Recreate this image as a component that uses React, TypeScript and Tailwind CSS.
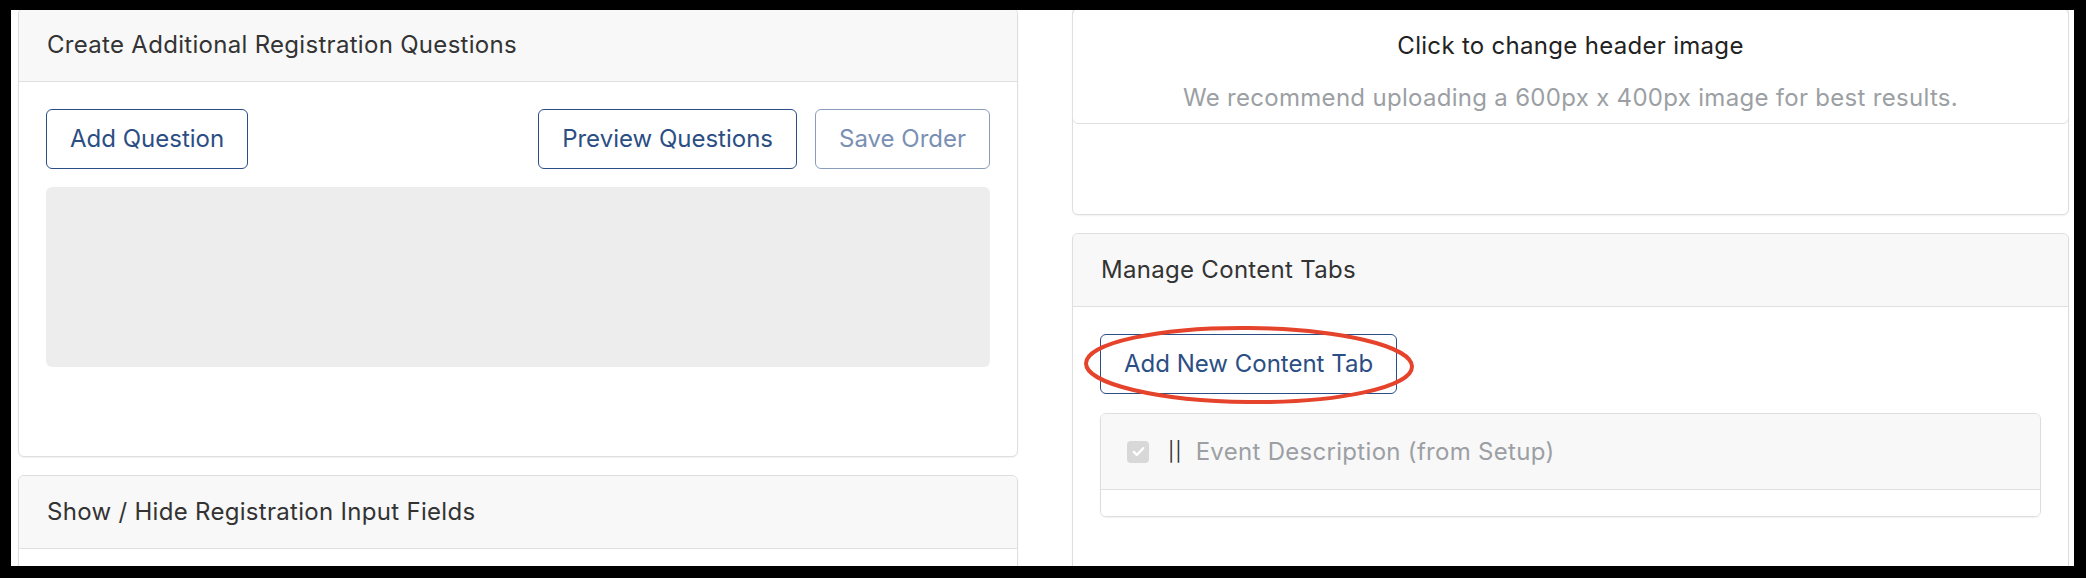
import React from 'react';

function Card({ title, children, className = '' }: { title?: string; children: React.ReactNode; className?: string }) {
  return (
    <div className={`rounded-[6px] border border-[#dedede] bg-white shadow-[0_1px_2px_rgba(0,0,0,0.06)] ${className}`}>
      {title && (
        <div className="flex h-[73px] items-center rounded-t-[6px] border-b border-[#e0e0e0] bg-[#f8f8f8] px-[28px] text-[24px] leading-[36px] text-[#333]">
          {title}
        </div>
      )}
      {children}
    </div>
  );
}

function OutlineButton({ label, muted = false }: { label: string; muted?: boolean }) {
  return (
    <button
      className={`flex h-[60px] items-center rounded-[6px] border px-[23px] text-[24px] leading-[34px] tracking-normal ${
        muted ? 'border-[#8a9dbd] text-[#7a90b3]' : 'border-[#2b4e84] text-[#2b4e84]'
      }`}
    >
      {label}
    </button>
  );
}

export default function App() {
  return (
    <div className="h-[578px] w-[2086px] bg-black pb-[12px] pl-[11px] pr-[12px] pt-[10px] font-['Inter','Liberation_Sans',sans-serif] tracking-[0.3px]">
      <div className="h-full overflow-hidden bg-white">
        <div className="-mt-[2px] flex gap-[54px] pl-[7px]">
          {/* left column */}
          <div className="flex w-[1000px] flex-col gap-[18px]">
            <Card title="Create Additional Registration Questions">
              <div className="px-[27px] pb-[89px] pt-[27px]">
                <div className="flex items-center justify-between">
                  <OutlineButton label="Add Question" />
                  <div className="flex gap-[18px]">
                    <OutlineButton label="Preview Questions" />
                    <OutlineButton label="Save Order" muted />
                  </div>
                </div>
                <div className="mt-[18px] h-[180px] rounded-[6px] bg-[#ededed]" />
              </div>
            </Card>
            <Card title="Show / Hide Registration Input Fields">
              <div className="h-[120px]" />
            </Card>
          </div>

          {/* right column */}
          <div className="flex w-[997px] flex-col gap-[18px]">
            <Card>
              <div className="-mx-px -mt-px flex flex-col items-center gap-[16px] rounded-[6px] border border-[#e0e0e0] pb-[7px] pt-[19px] text-[24px] leading-[36px]">
                <div className="text-[#222]">Click to change header image</div>
                <div className="text-[#9c9fa4]">We recommend uploading a 600px x 400px image for best results.</div>
              </div>
              <div className="h-[90px]" />
            </Card>
            <Card title="Manage Content Tabs">
              <div className="px-[27px] pb-[60px] pt-[27px]">
                <div className="relative w-fit">
                  <OutlineButton label="Add New Content Tab" />
                  <svg
                    className="pointer-events-none absolute -left-[17px] -top-[9px]"
                    width="334"
                    height="80"
                    viewBox="0 0 334 80"
                    fill="none"
                  >
                    <ellipse cx="166" cy="40" rx="163" ry="37" stroke="#e5432b" strokeWidth="4" transform="rotate(0.6 166 40)" />
                  </svg>
                </div>
                <div className="mt-[19px] overflow-hidden rounded-[6px] border border-[#dedede] shadow-[0_1px_2px_rgba(0,0,0,0.06)]">
                  <div className="flex h-[76px] items-center border-b border-[#e0e0e0] bg-[#f8f8f8] pl-[26px]">
                    <span className="flex h-[22px] w-[22px] items-center justify-center rounded-[4px] bg-[#d8d8d8]">
                      <svg width="15" height="15" viewBox="0 0 16 16" fill="none">
                        <path d="M3 8.5l3.2 3.2L13 4.5" stroke="#fff" strokeWidth="2.6" strokeLinecap="round" strokeLinejoin="round" />
                      </svg>
                    </span>
                    <span className="ml-[19px] text-[19px] leading-[22px] tracking-[1px] text-[#333]">||</span>
                    <span className="ml-[13px] text-[24px] leading-[36px] text-[#9c9fa4]">Event Description (from Setup)</span>
                  </div>
                  <div className="h-[26px] bg-white" />
                </div>
              </div>
            </Card>
          </div>
        </div>
      </div>
    </div>
  );
}
